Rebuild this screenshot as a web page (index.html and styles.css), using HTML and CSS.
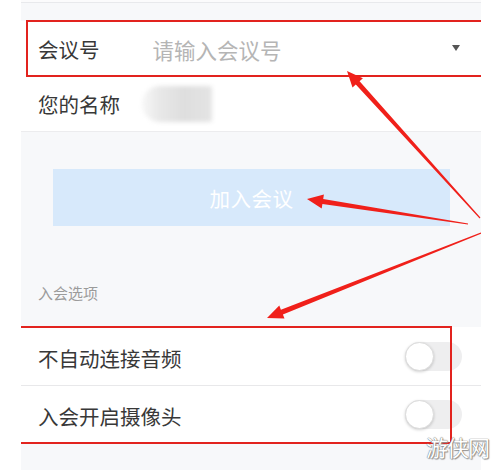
FILE: index.html
```html
<!DOCTYPE html>
<html lang="zh-CN">

<head>
    <meta charset="UTF-8">
    <meta name="viewport" content="width=device-width, initial-scale=1.0">
    <title>加入会议</title>
    <link rel="stylesheet" href="styles.css">
</head>

<body>
    <div class="page">
        <div class="top"></div>

        <div class="form">
            <div class="row">
                <span class="label">会议号</span>
                <span class="placeholder">请输入会议号</span>
                <span class="caret"></span>
            </div>
            <div class="row name-row">
                <span class="label">您的名称</span>
                <span class="blur"></span>
            </div>
        </div>

        <div class="actions">
            <button class="join">加入会议</button>
        </div>

        <p class="section-title">入会选项</p>

        <div class="options">
            <div class="row option">
                <span class="label">不自动连接音频</span>
                <span class="switch"></span>
            </div>
            <div class="row option">
                <span class="label">入会开启摄像头</span>
                <span class="switch"></span>
            </div>
        </div>

        <!-- annotations -->
        <div class="mark mark-top"></div>
        <div class="mark mark-bottom"></div>
        <svg class="arrows" width="460" height="470" viewBox="21 0 460 470">
            <polygon points="480.4,217.6 359.6,81.2 362.9,78.2 347,71 352.5,87.6 355.8,84.6 479.6,218.4" />
            <polygon points="468.1,223.4 323.2,198.9 323.9,194.6 307,199 321.7,208.4 322.4,204.1 467.9,224.6" />
            <polygon points="481.2,233.6 282.9,314.5 284.5,318.6 267,318 279.3,305.6 280.9,309.7 480.8,232.4" />
        </svg>
    </div>
    <div class="watermark">游侠网</div>
</body>

</html>
```

FILE: styles.css
```css
body {
    margin: 0;
    background-color: white;
    font-family: "Noto Sans CJK SC", "Noto Sans", sans-serif;
    color: #333;
    height: 470px;
    overflow: hidden;
    position: relative;
}

.page {
    position: relative;
    margin-left: 21px;
    width: 460px;
    height: 470px;
    background-color: #f7f8fa;
    overflow: hidden;
}

.top {
    height: 2px;
    background-color: #fbfbfc;
    border-bottom: 1px solid #e8e9ec;
    margin-bottom: 18px;
}

.form,
.options {
    background-color: white;
}

.row {
    display: flex;
    align-items: center;
    height: 56px;
    padding: 0 19px 0 17px;
}

.label {
    font-size: 20.5px;
    line-height: 24px;
    color: #383838;
}

.placeholder {
    flex: 1;
    margin-left: 53px;
    font-size: 21.5px;
    color: #b5b5b5;
}

.caret {
    width: 0;
    height: 0;
    margin-right: 2px;
    margin-bottom: 2px;
    border-left: 4px solid transparent;
    border-right: 4px solid transparent;
    border-top: 6px solid #555;
}

.name-row {
    height: 54px;
    border-bottom: 1px solid #ececee;
}

.blur {
    width: 70px;
    height: 36px;
    margin-left: 22px;
    background: linear-gradient(90deg, #f7f7f7 0, #e8e8e8 25%, #dedede 60%, #e4e4e4 100%);
    border-radius: 18px 2px 2px 18px;
    filter: blur(2px);
}

.actions {
    padding: 37px 31px 0 32px;
}

.join {
    display: block;
    width: 100%;
    height: 57px;
    border: none;
    background-color: #d7e9fb;
    color: white;
    font-family: inherit;
    font-size: 20.5px;
    letter-spacing: 0.5px;
}

.section-title {
    margin: 57px 0 24px;
    padding-left: 17px;
    font-size: 15px;
    line-height: 20px;
    color: #9b9b9b;
}

.option {
    height: 58px;
}

.option + .option {
    height: 56px;
    border-top: 1px solid #e8e8ea;
}

.option .label {
    flex: 1;
    margin-top: 3px;
}

.switch {
    position: relative;
    width: 57px;
    height: 29px;
    border-radius: 15px;
    background-color: #eeeeef;
}

.switch::after {
    content: "";
    position: absolute;
    left: 0;
    top: 0;
    width: 27px;
    height: 27px;
    border-radius: 50%;
    background-color: white;
    border: 1px solid #dcdcdc;
    box-shadow: 0 1px 3px rgba(0, 0, 0, 0.18);
}

.mark {
    position: absolute;
    border: 2px solid #e2231e;
}

.mark-top {
    left: 5px;
    top: 20px;
    width: 470px;
    height: 53px;
}

.mark-bottom {
    left: -6px;
    top: 326px;
    width: 433px;
    height: 114px;
}

.arrows {
    position: absolute;
    left: 0;
    top: 0;
}

.arrows polygon {
    fill: #f0201a;
}

.watermark {
    position: absolute;
    left: 426px;
    top: 430px;
    font-size: 22px;
    color: white;
    letter-spacing: -1px;
    text-shadow: 0 0 1px #777, 0 0 1px #777, 1px 1px 1px #999;
}
```
